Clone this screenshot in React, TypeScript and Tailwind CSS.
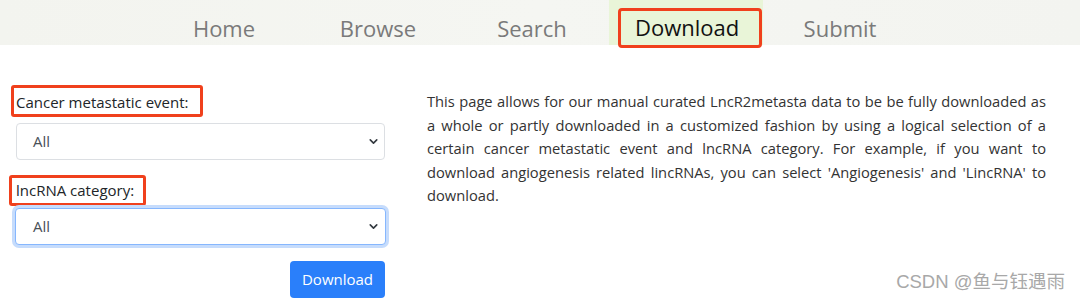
import { ChevronDown } from "lucide-react";

const navItems = ["Home", "Browse", "Search", "Download", "Submit"];

function NavBar() {
  return (
    <div className="h-[45px] w-full bg-[linear-gradient(90deg,#f3f4ef,#f5f6f2_50%,#f3f4f0)] flex pl-[147px]">
      {navItems.map((item) =>
        item === "Download" ? (
          <div
            key={item}
            className="w-[154px] h-[45px] bg-[#e9f5d8] flex justify-end pt-[8px] pr-[1px]"
          >
            <div className="w-[144px] h-[40px] border-[3px] border-[#f0401c] rounded-[4px] flex items-center pl-[14px] text-[22px] text-[#111] pb-[2px]">
              {item}
            </div>
          </div>
        ) : (
          <div
            key={item}
            className="w-[154px] h-[45px] flex items-center justify-center pt-[12px] text-[22px] text-[#7a7a7a]"
          >
            {item}
          </div>
        )
      )}
    </div>
  );
}

function Select({ focused }: { focused?: boolean }) {
  return (
    <div
      className={
        focused
          ? "h-[37px] w-[371px] ml-[15px] rounded-[4px] border border-[#86b7fe] shadow-[0_0_0_3px_#c6dcfc] bg-white flex items-center justify-between pl-[17px] pr-[5px] text-[15px] text-[#495057]"
          : "h-[37px] w-[369px] ml-[16px] rounded-[4px] border border-[#dcdfe3] bg-white flex items-center justify-between pl-[16px] pr-[4px] text-[15px] text-[#495057]"
      }
    >
      <span>All</span>
      <ChevronDown size={13} strokeWidth={3} className="text-[#343a40]" />
    </div>
  );
}

export default function App() {
  return (
    <div className="w-[1080px] h-[301px] bg-white overflow-hidden font-['Open_Sans','Noto_Sans_CJK_SC',sans-serif] relative">
      <NavBar />
      <div className="flex">
        <div className="w-[400px] flex flex-col">
          <div className="mt-[40px] ml-[11px] w-[192px] h-[32px] border-[3px] border-[#f0401c] rounded-[3px] flex items-center pl-[2px] pt-[2px] text-[15px] text-[#212529]">
            Cancer metastatic event:
          </div>
          <div className="mt-[6px]">
            <Select />
          </div>
          <div className="mt-[15px] ml-[9px] w-[137px] h-[31px] border-[3px] border-[#f0401c] rounded-[3px] flex items-center pl-[4px] text-[15px] text-[#212529]">
            lncRNA category:
          </div>
          <div className="mt-[2px]">
            <Select focused />
          </div>
          <div className="mt-[16px] flex justify-end pr-[15px]">
            <button className="w-[95px] h-[37px] rounded-[4px] bg-[#2a7ffa] text-white text-[15px]">
              Download
            </button>
          </div>
        </div>
        <p className="ml-[27px] mt-[45px] w-[619px] text-[14.7px] leading-[23.6px] text-[#333] text-justify">
          This page allows for our manual curated LncR2metasta data to be be
          fully downloaded as a whole or partly downloaded in a customized
          fashion by using a logical selection of a certain cancer metastatic
          event and lncRNA category. For example, if you want to download
          angiogenesis related lincRNAs, you can select 'Angiogenesis' and
          'LincRNA' to download.
        </p>
      </div>
      <div className="absolute right-[15px] bottom-[5px] text-[18.5px] text-[#a8a8a8] font-['Liberation_Sans','Noto_Sans_CJK_SC',sans-serif]">
        CSDN @鱼与钰遇雨
      </div>
    </div>
  );
}
